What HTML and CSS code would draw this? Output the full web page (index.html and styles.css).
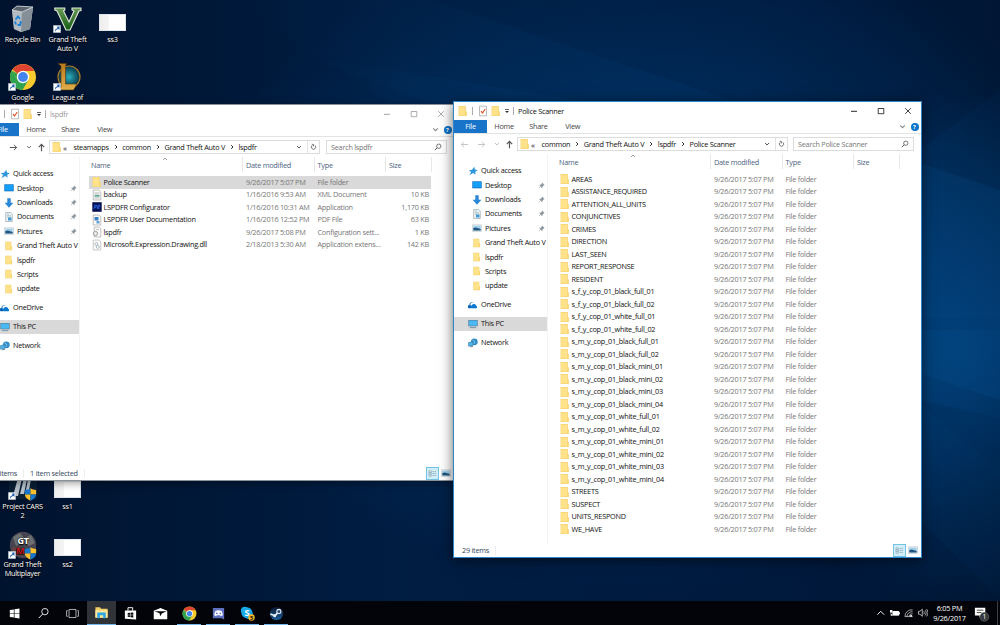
FILE: index.html
```html
<!DOCTYPE html>
<html lang="en">
<head>
  <meta charset="UTF-8" />
  <title>Desktop</title>
  <link rel="stylesheet" href="styles.css">
</head>
<body>
  <!-- icon sprite -->
  <svg class="sprite" aria-hidden="true">
    <defs>
      <linearGradient id="beam" x1="0" y1="0" x2="1" y2="0">
        <stop offset="0" stop-color="#0a62ad" stop-opacity="0"/>
        <stop offset="1" stop-color="#0a62ad" stop-opacity=".42"/>
      </linearGradient>
      <linearGradient id="beamBack" x1="0" y1="0" x2="1" y2="0">
        <stop offset="0" stop-color="#0a5fa8" stop-opacity=".5"/>
        <stop offset="1" stop-color="#0a5fa8" stop-opacity=".1"/>
      </linearGradient>
      <linearGradient id="vGreen" x1="0" y1="0" x2="0" y2="1">
        <stop offset="0" stop-color="#6b9b58"/><stop offset="1" stop-color="#145c12"/>
      </linearGradient>
      <linearGradient id="gold" x1="0" y1="0" x2="0" y2="1">
        <stop offset="0" stop-color="#b9791d"/><stop offset="1" stop-color="#e0ae4b"/>
      </linearGradient>
      <radialGradient id="teal"><stop offset="0" stop-color="#2ab0bd"/><stop offset="1" stop-color="#083348"/></radialGradient>
      <linearGradient id="steamBlue" x1="0" y1="0" x2="0" y2="1">
        <stop offset="0" stop-color="#0b1730"/><stop offset="1" stop-color="#1b5f9c"/>
      </linearGradient>
    </defs>
    <symbol id="folder" viewBox="0 0 10 12">
      <path d="M.6 1h7.200v5.300h.9V11H.6z" fill="#f2cd68"/>
      <path d="M1.100 1.500h6.200v9H1.100z" fill="#ffe28a"/>
      <path d="M7 6.600h1.300v4.100H7z" fill="#fbd870"/>
    </symbol>
    <symbol id="props" viewBox="0 0 10 12">
      <path d="M1.500 1.200h7v9.600h-7z" fill="#fff" stroke="#aaa" stroke-width=".8"/>
      <path d="M3 6.200l1.500 1.800L7.200 4" fill="none" stroke="#e0562d" stroke-width="1.200"/>
    </symbol>
    <symbol id="customize" viewBox="0 0 6 6"><path d="M1 1h4v.8H1zM1 3h4L3 5z" fill="#333"/></symbol>
    <symbol id="back" viewBox="0 0 10 10"><path d="M9 5H1.500M4.500 2l-3 3 3 3" fill="none" stroke="currentColor" stroke-width="1.100"/></symbol>
    <symbol id="forward" viewBox="0 0 10 10"><path d="M1 5h7.500M5.500 2l3 3-3 3" fill="none" stroke="currentColor" stroke-width="1.100"/></symbol>
    <symbol id="up" viewBox="0 0 10 10"><path d="M5 9.200V1.500M2 4.500l3-3 3 3" fill="none" stroke="currentColor" stroke-width="1.300"/></symbol>
    <symbol id="down" viewBox="0 0 6 6"><path d="M1 2l2 2 2-2" fill="none" stroke="currentColor" stroke-width=".9"/></symbol>
    <symbol id="caret" viewBox="0 0 6 6"><path d="M1 4l2-2 2 2" fill="none" stroke="currentColor" stroke-width=".7"/></symbol>
    <symbol id="chev" viewBox="0 0 6 6"><path d="M2.200 1.200L4 3 2.200 4.800" fill="none" stroke="currentColor" stroke-width=".9"/></symbol>
    <symbol id="reload" viewBox="0 0 8 8"><path d="M5.800 2.300A2.500 2.500 0 1 1 2.300 2.200M2 .8l2.300.6-.7 2" fill="none" stroke="#555" stroke-width=".9"/></symbol>
    <symbol id="search" viewBox="0 0 10 10"><circle cx="6" cy="4" r="2.700" fill="none" stroke="currentColor" stroke-width="1"/><path d="M4 6L1 9" stroke="currentColor" stroke-width="1.200"/></symbol>
    <symbol id="min" viewBox="0 0 8 8"><path d="M1 4.300h6" stroke="currentColor" stroke-width=".9"/></symbol>
    <symbol id="max" viewBox="0 0 8 8"><path d="M1.200 1.500h5.600v5.200H1.200z" fill="none" stroke="currentColor" stroke-width=".8"/></symbol>
    <symbol id="close" viewBox="0 0 8 8"><path d="M1.200 1.200l5.600 5.600M6.800 1.200L1.200 6.800" stroke="currentColor" stroke-width=".8"/></symbol>
    <symbol id="star" viewBox="0 0 10 10"><path d="M6.400.8l.5 2.800 2.900.6-2.500 1.600.2 2.900-2.300-1.600-3.700 2.200 1.600-3.200L.8 4.300l3.200-.6z" fill="#2f97dc"/></symbol>
    <symbol id="desk" viewBox="0 0 10 10"><path d="M.3 1.300h9.400v7H.3z" fill="#0c6fc0"/><path d="M1 2h8v5.500H1z" fill="#14a0f8"/></symbol>
    <symbol id="dl" viewBox="0 0 10 10"><path d="M3.300.3h3.400v4.400h2.700L5 9.700.6 4.700h2.700z" fill="#2b87d8"/></symbol>
    <symbol id="doc" viewBox="0 0 10 10"><path d="M1.700.5h5l1.600 1.700v7.300H1.700z" fill="#eef4f8" stroke="#8b9aa5" stroke-width=".6"/><path d="M3 2.200h2M3 3.700h4M3 5.200h4" stroke="#8aa" stroke-width=".6"/><path d="M4 5.500h3.500v3H4z" fill="#469bd2"/></symbol>
    <symbol id="pic" viewBox="0 0 10 10"><path d="M.4 1.800h9.200v6.600H.4z" fill="#f3f6f8" stroke="#aab4ba" stroke-width=".5"/><path d="M1.300 2.700h7.400v4.800H1.300z" fill="#9fd0ee"/><path d="M1.300 5l2.500-.5 4.900 1.600v1.400H1.300z" fill="#22567e"/></symbol>
    <symbol id="cloud" viewBox="0 0 10 10"><path d="M3 8.300H1.400A1.600 1.600 0 0 1 1.300 5 3 3 0 0 1 6.600 3.200 2 2 0 0 0 3 6z" fill="#0a64b5"/><path d="M3.600 8.300a1.600 1.600 0 0 1 .3-3.100 2.300 2.300 0 0 1 4.300.6 1.400 1.400 0 0 1 .3 2.500z" fill="#0a78d2"/></symbol>
    <symbol id="pc" viewBox="0 0 10 10"><path d="M.3 1h9.400v6.300H.3z" fill="#5d7f96"/><path d="M.9 1.600h8.200v5.100H.9z" fill="#4ab8f3"/><path d="M1.800 8.600h6.400" stroke="#6b8ea6" stroke-width=".9"/></symbol>
    <symbol id="net" viewBox="0 0 10 10"><circle cx="6.300" cy="3.800" r="3.400" fill="#2f8cc8"/><path d="M4.500 2l2.300 1.500-1 2.500" fill="none" stroke="#92d5ef" stroke-width=".8"/><path d="M.4 4.600l4.500-1v3.900l-4.500.7z" fill="#4bb4ea" stroke="#376e91" stroke-width=".5"/><path d="M2 8.800l3-.5" stroke="#68899e"/></symbol>
    <symbol id="pin" viewBox="0 0 8 8"><path d="M4.800 1l2.300 2.300-.8.400L5 5l-.3 1.600-2.900-2.900L3.300 3.400l1.200-1.500zM3 5L1 7" fill="#8a949c" stroke="#8a949c" stroke-width=".6"/></symbol>
    <symbol id="xml" viewBox="0 0 10 12"><path d="M1.200 1h6l1.600 1.800V11H1.200z" fill="#fafafa" stroke="#999" stroke-width=".6"/><path d="M2.500 4h5M2.500 9h5" stroke="#999" stroke-width=".7"/><path d="M2.500 5.700h5v2h-5z" fill="#5fa892"/></symbol>
    <symbol id="pdf" viewBox="0 0 10 12"><path d="M1.200 1h6l1.600 1.800V11H1.200z" fill="#fafafa" stroke="#999" stroke-width=".6"/><path d="M2.500 3h4v3.500h-4z" fill="#3b7fc4"/><path d="M4.500 7h3v2.500h-3z" fill="#68a0cf"/></symbol>
    <symbol id="ini" viewBox="0 0 10 12"><path d="M2.200 1h5l1.600 1.800V11H2.200z" fill="#fafafa" stroke="#999" stroke-width=".6"/><circle cx="3.500" cy="7.500" r="2.100" fill="#eee" stroke="#999"/><path d="M4 3.500h3" stroke="#999" stroke-width=".6"/></symbol>
    <symbol id="dll" viewBox="0 0 10 12"><path d="M1.200 1h6l1.600 1.800V11H1.200z" fill="#fafafa" stroke="#aaa" stroke-width=".6"/><circle cx="4.300" cy="5" r="1.500" fill="none" stroke="#9fb0ba" stroke-width=".8"/><circle cx="5.800" cy="7.900" r="1.500" fill="none" stroke="#9fb0ba" stroke-width=".8"/></symbol>
    <symbol id="exe" viewBox="0 0 10 12"><path d="M.3 1.200h9.400v9.600H.3z" fill="#041150"/><path d="M2 8l.8-3.800h1.700L4 6.200H2.500M5.300 8l.8-3.800h1.700l-.7 1.900H5.800L7 8" fill="none" stroke="#2767e6" stroke-width=".9"/></symbol>
    <symbol id="details" viewBox="0 0 14 14"><path d="M2.500 3.500h3v7h-3z" fill="none" stroke="#8a9ca6" stroke-width=".7"/><path d="M2.500 5.800h3M2.500 8.200h3M7 4.500h1.800M9.500 4.500h2M7 7h1.800M9.500 7h2M7 9.500h1.800M9.500 9.500h2" stroke="#7c929f" stroke-width=".8"/></symbol>
    <symbol id="shortcut" viewBox="0 0 8 8"><path d="M.3.3h7.400v7.400H.3z" fill="#fff" stroke="#8fa2b8" stroke-width=".4"/><path d="M2 6.800c-.3-2 .5-3.200 2.300-3.300V2H3l3.500-.7L6.400 5l-.9-.9C4 4.300 3 5 2 6.800z" fill="#1b5cab"/></symbol>
    <symbol id="shield" viewBox="0 0 12 12"><path d="M6 .3C4.600 1.500 2.700 1.800.8 1.800V6H6z" fill="#1777cf"/><path d="M6 .3c1.400 1.200 3.300 1.500 5.200 1.500V6H6z" fill="#fbc02c"/><path d="M.8 6H6v5.800C3 10.500 1 8.500.8 6z" fill="#fbc02c"/><path d="M6 6h5.200C11 8.500 9 10.500 6 11.800z" fill="#1777cf"/></symbol>
    <symbol id="chrome" viewBox="0 0 28 28">
      <circle cx="14" cy="14" r="13" fill="#f9cb2f"/>
      <path d="M2.700 7.500A13 13 0 0 0 13.500 27L19.500 17 14 14 8.700 17.500z" fill="#2fa350"/>
      <path d="M2.700 7.500L8.700 17.300 14 14z" fill="#2fa350"/>
      <path d="M3.500 6.500L9 11l5-3h11.300A13 13 0 0 0 3.500 6.500z" fill="#df4433"/>
      <circle cx="14" cy="14" r="6.200" fill="#fff"/><circle cx="14" cy="14" r="4.900" fill="#4384ee"/>
    </symbol>
  </svg>

  <div class="desktop">
    <svg class="wallpaper" viewBox="0 0 1000 625" preserveAspectRatio="none">
      <path d="M230 0H430L1000 190V400L700 300z" fill="url(#beam)" opacity=".3"/>
      <path d="M300 55L760 130V300L560 150z" fill="url(#beam)" opacity=".35"/>
      <path d="M720 300L920 150 1000 90V318H720z" fill="url(#beamBack)" opacity=".35"/>
      <path d="M720 330H1000V418L920 400 720 345z" fill="url(#beamBack)" opacity=".6"/>
      <path d="M800 380L920 405 1000 470V600L920 520z" fill="url(#beamBack)" opacity=".25"/>
    </svg>

    <div class="icon-grid">
      <div class="shortcut c1 r1">
        <svg class="pic" viewBox="0 0 28 28"><path d="M3 5l5-4 16 1-3 22-9 3-7-3z" fill="#8c969f"/><path d="M3 5l10 2 11-5-3 22-9 3-7-3z" fill="#b8bec3" opacity=".9"/><path d="M13 7l11-5-3 22-9 3z" fill="#858f98"/><path d="M3 5l5-4 16 1-11 5z" fill="#5b646d" stroke="#d8dcdf" stroke-width=".8"/><path d="M6.500 14.500l2.500-3 2 2.500M12 16l-1 4H8.500M6 16.500l1 3" fill="none" stroke="#1680d8" stroke-width="1.800"/></svg>
        <span>Recycle Bin</span>
      </div>
      <div class="shortcut c2 r1">
        <svg class="pic" viewBox="0 0 28 28"><path d="M.8 3h10v2L9.500 6l5.500 11 5-11-2-1V3h9v2.500l-2 .5L16 25h-4L3 6 .8 5z" fill="url(#vGreen)" stroke="#e2e7dc" stroke-width="1.100"/></svg>
        <svg class="arrow"><use href="#shortcut"/></svg>
        <span>Grand Theft Auto V</span>
      </div>
      <div class="shortcut c3 r1"><i class="thumb"></i><span>ss3</span></div>
      <div class="shortcut c1 r2">
        <svg class="pic"><use href="#chrome"/></svg>
        <svg class="arrow"><use href="#shortcut"/></svg>
        <span>Google Chrome</span>
      </div>
      <div class="shortcut c2 r2">
        <svg class="pic" viewBox="0 0 28 28"><circle cx="15" cy="14" r="11" fill="url(#teal)" stroke="#a87926" stroke-width="1.200"/><path d="M4 .5h8.500L11.500 3v18H23l-3.500 6H5l2-3V3z" fill="url(#gold)" stroke="#56390d" stroke-width=".6"/></svg>
        <svg class="arrow"><use href="#shortcut"/></svg>
        <span>League of Legends</span>
      </div>
      <div class="shortcut c1 r9">
        <svg class="pic" viewBox="0 0 28 28"><path d="M0 1h28v26H0z" fill="#0b2035"/><path d="M4 24L10 2h4L9 24zM11 22L16 2h3l-4 20zM17 18L20 2h3l-3 16z" fill="#b8c1cb"/></svg>
        <svg class="arrow"><use href="#shortcut"/></svg>
        <svg class="uac"><use href="#shield"/></svg>
        <span>Project CARS 2</span>
      </div>
      <div class="shortcut c2 r9"><i class="thumb"></i><span>ss1</span></div>
      <div class="shortcut c1 r10">
        <svg class="pic" viewBox="0 0 28 28"><circle cx="14" cy="14" r="13.200" fill="#454450"/><path d="M4 6l7-4 4 5 7-3 4 8-6 3-5-4-8 4z" fill="#6d7071"/><path d="M2 17l9-2 3 10-7 0z" fill="#694240"/><text x="14" y="12.500" class="gt">GT</text><text x="11" y="23" class="gtm">M</text></svg>
        <svg class="arrow"><use href="#shortcut"/></svg>
        <svg class="uac"><use href="#shield"/></svg>
        <span>Grand Theft Multiplayer</span>
      </div>
      <div class="shortcut c2 r10"><i class="thumb"></i><span>ss2</span></div>
    </div>

    <div class="window win-lspdfr">
      <div class="titlebar">
        <svg class="i-file"><use href="#folder"/></svg><i class="bar"></i>
        <svg class="i-file"><use href="#props"/></svg>
        <svg class="i-file"><use href="#folder"/></svg>
        <svg class="i-tiny"><use href="#customize"/></svg><i class="bar"></i>
        <span class="title">lspdfr</span>
        <div class="controls"><svg><use href="#min"/></svg><svg><use href="#max"/></svg><svg><use href="#close"/></svg></div>
      </div>
      <div class="ribbon">
        <span class="file-tab">File</span><span>Home</span><span>Share</span><span>View</span>
        <svg class="expand"><use href="#down"/></svg><b class="help">?</b>
      </div>
      <div class="address-row">
        <svg class="go"><use href="#back"/></svg><svg class="go on"><use href="#forward"/></svg><svg class="recent"><use href="#down"/></svg><svg class="go on"><use href="#up"/></svg>
        <div class="address">
          <svg class="i-file"><use href="#folder"/></svg><em>«</em>
          <span>steamapps</span><svg><use href="#chev"/></svg><span>common</span><svg><use href="#chev"/></svg><span>Grand Theft Auto V</span><svg><use href="#chev"/></svg><span>lspdfr</span>
          <svg class="drop"><use href="#down"/></svg><svg class="reload"><use href="#reload"/></svg>
        </div>
        <div class="search"><span>Search lspdfr</span><svg><use href="#search"/></svg></div>
      </div>
      <div class="body">
        <div class="nav"></div>
        <div class="files" id="lspdfrFiles"></div>
      </div>
      <div class="status"><span>6 items</span><span class="selected-count">1 item selected</span>
        <div class="views"><svg class="on"><use href="#details"/></svg><svg class="large"><use href="#pic"/></svg></div>
      </div>
    </div>

    <div class="window win-scanner active">
      <div class="titlebar">
        <svg class="i-file"><use href="#folder"/></svg><i class="bar"></i>
        <svg class="i-file"><use href="#props"/></svg>
        <svg class="i-file"><use href="#folder"/></svg>
        <svg class="i-tiny"><use href="#customize"/></svg><i class="bar"></i>
        <span class="title">Police Scanner</span>
        <div class="controls"><svg><use href="#min"/></svg><svg><use href="#max"/></svg><svg><use href="#close"/></svg></div>
      </div>
      <div class="ribbon">
        <span class="file-tab">File</span><span>Home</span><span>Share</span><span>View</span>
        <svg class="expand"><use href="#down"/></svg><b class="help">?</b>
      </div>
      <div class="address-row">
        <svg class="go"><use href="#back"/></svg><svg class="go"><use href="#forward"/></svg><svg class="recent off"><use href="#down"/></svg><svg class="go on"><use href="#up"/></svg>
        <div class="address">
          <svg class="i-file"><use href="#folder"/></svg><em>«</em>
          <span>common</span><svg><use href="#chev"/></svg><span>Grand Theft Auto V</span><svg><use href="#chev"/></svg><span>lspdfr</span><svg><use href="#chev"/></svg><span>Police Scanner</span>
          <svg class="drop"><use href="#down"/></svg><svg class="reload"><use href="#reload"/></svg>
        </div>
        <div class="search"><span>Search Police Scanner</span><svg><use href="#search"/></svg></div>
      </div>
      <div class="body">
        <div class="nav"></div>
        <div class="files" id="scannerFiles"></div>
      </div>
      <div class="status"><span>29 items</span>
        <div class="views"><svg class="on"><use href="#details"/></svg><svg class="large"><use href="#pic"/></svg></div>
      </div>
    </div>

    <div class="taskbar">
      <div class="task"><svg viewBox="0 0 16 16"><path d="M3 4.300l4.300-.7v4H3zM8 3.500l5.300-.8v4.900H8zM3 8.300h4.300v4L3 11.700zM8 8.300h5.300v5L8 12.500z" fill="#fff"/></svg></div>
      <div class="task"><svg viewBox="0 0 16 16"><circle cx="9.500" cy="6" r="3.400" fill="none" stroke="#fff" stroke-width=".9"/><path d="M7 8.700L3 12.800" stroke="#fff"/></svg></div>
      <div class="task"><svg viewBox="0 0 16 16"><path d="M4.300 3.700h7.400v8.600H4.300zM3 5H1.700v6H3M13 5h1.300v6H13" fill="none" stroke="#ddd" stroke-width=".8"/></svg></div>
      <div class="task current"><svg viewBox="0 0 16 16"><path d="M1.500 2.500h5l1 1.500h7v9.500h-13z" fill="#f6cd66"/><path d="M1.500 5.500h13v8h-13z" fill="#ffe69a"/><path d="M3.500 8h9v6h-2.700v-3H6.200v3H3.500z" fill="#2ba6e4"/></svg></div>
      <div class="task"><svg viewBox="0 0 16 16"><path d="M2 4.800h12v9.700L2 13.500z" fill="#fff"/><path d="M5.300 5V1.800h5V5" fill="none" stroke="#fff"/><path d="M5 7.500l2.500-.3v2H5zM8 7.200l3-.4v2.400H8zM5 9.800h2.500v2L5 11.500zM8 9.800h3v2.400l-3-.3z" fill="#05070c"/></svg></div>
      <div class="task"><svg viewBox="0 0 16 16"><path d="M.8 5L8 2l7.200 3v9H.8z" fill="#fff"/><path d="M1.500 5.500h13L9.500 8l-1.800 2.800L7 7.800z" fill="#05070c"/></svg></div>
      <div class="task open"><svg class="small"><use href="#chrome"/></svg></div>
      <div class="task open"><svg viewBox="0 0 16 16"><path d="M2 2h12v12.500L11.500 13H2z" fill="#5e70bf"/><path d="M4.800 5.200c2-1 4.400-1 6.400 0 .8 1.300 1.300 3 1.300 4.700l-2 1-.7-1H6.200l-.7 1-2-1c0-1.700.5-3.400 1.300-4.700z" fill="#fff"/><circle cx="6.200" cy="7.800" r=".9" fill="#5e70bf"/><circle cx="9.800" cy="7.800" r=".9" fill="#5e70bf"/></svg></div>
      <div class="task open"><svg viewBox="0 0 16 16"><circle cx="5" cy="4.700" r="4" fill="#18a9e8"/><circle cx="9.500" cy="9.500" r="4.300" fill="#18a9e8"/><circle cx="7.300" cy="7" r="5.800" fill="#18a9e8"/><text x="7.300" y="10.700" class="skype">S</text><circle cx="12.300" cy="12.300" r="3.400" fill="#f9b72b"/><text x="12.300" y="14.500" class="count">5</text></svg></div>
      <div class="task open"><svg viewBox="0 0 16 16"><circle cx="8" cy="8" r="7" fill="url(#steamBlue)"/><path d="M1.500 8.500l5 2L10 6.300" stroke="#e8eef4" stroke-width="1.800" fill="none"/><circle cx="10.500" cy="5.800" r="2.200" fill="#26476e" stroke="#e8eef4" stroke-width="1.100"/><circle cx="6" cy="10.500" r="1.600" fill="#e8eef4"/></svg></div>
      <div class="tray">
        <svg viewBox="0 0 12 12"><path d="M2.500 8L6 4.500 9.500 8" fill="none" stroke="#fff"/></svg>
        <svg viewBox="0 0 12 12"><path d="M3.500 4.200h7v4.800h-7z" fill="#fff"/><path d="M10.500 5.500h1v2h-1zM1 3v2c0 1.500 2.500 1.500 2.500 0V3zM1.800 6v3h2" fill="#fff"/></svg>
        <svg viewBox="0 0 12 12"><path d="M2 10a7 7 0 0 1 8-7M4 10a5.500 5.500 0 0 1 6-5M6 10a4 4 0 0 1 4-3M2 10h8" fill="none" stroke="#bbb" stroke-width=".9"/><path d="M7.500 8.500h2V10h-2z" fill="#fff"/></svg>
        <svg viewBox="0 0 12 12"><path d="M1.500 4.500H3l2.500-2.200v7.400L3 7.500H1.500zM7 4.500c.8 1 .8 2 0 3M8.500 3.300c1.500 1.800 1.500 3.600 0 5.400M10 2.200c2 2.400 2 5.200 0 7.600" fill="none" stroke="#ddd" stroke-width=".8"/></svg>
        <div class="clock"><span>6:05 PM</span><span>9/26/2017</span></div>
        <svg class="action" viewBox="0 0 18 18"><path d="M2 3h11v8H9.500L7 13.500V11H2z" fill="#fff"/><path d="M4 5.500h7M4 8h5" stroke="#111" stroke-width=".8"/><circle cx="12" cy="12.500" r="4.700" fill="#35383c" stroke="#84878a" stroke-width=".5"/><text x="12" y="15" class="note">1</text></svg>
      </div>
    </div>
  </div>

  <script src="script.js"></script>
</body>
</html>
```
FILE: styles.css
```css
* {
  box-sizing: border-box;
}

body {
  margin: 0;
  font-family: 'Open Sans', 'Noto Sans', sans-serif;
  font-size: 7.300px;
  line-height: 9px;
  letter-spacing: -0.25px;
  color: #111;
  overflow: hidden;
}

svg {
  display: block;
  flex: none;
}

.sprite {
  position: absolute;
  width: 0;
  height: 0;
}

.desktop {
  position: relative;
  width: 1000px;
  height: 625px;
  overflow: hidden;
  background-color: #001a3b;
  background-image:
    radial-gradient(ellipse 210px 260px at 960px 350px, rgba(0, 78, 145, 0.6), rgba(0, 60, 120, 0) 100%),
    radial-gradient(ellipse 460px 330px at 650px 260px, rgba(0, 65, 125, 0.75), rgba(0, 50, 100, 0) 100%),
    linear-gradient(90deg, #00132e, #001d42 40%, #001a3e 75%, #001634);
}

.wallpaper {
  position: absolute;
  width: 1000px;
  height: 625px;
}

/* desktop shortcuts */
.icon-grid {
  position: absolute;
  left: 0;
  top: 0;
  display: grid;
  grid-template-columns: repeat(3, 45px);
  grid-template-rows: repeat(10, 58.4px);
}

.c1 { grid-column: 1; }
.c2 { grid-column: 2; }
.c3 { grid-column: 3; }
.r1 { grid-row: 1; }
.r2 { grid-row: 2; }
.r9 { grid-row: 9; }
.r10 { grid-row: 10; }

.shortcut {
  position: relative;
  padding: 5px 2px 0;
  color: #fff;
  text-align: center;
  text-shadow: 0 1px 1px #000, 0 0 2px #000;
}

.shortcut .pic {
  width: 28px;
  height: 28px;
  margin: 0 auto 1.500px;
}

.shortcut .arrow {
  position: absolute;
  left: 8px;
  top: 25px;
  width: 8px;
  height: 8px;
}

.shortcut .uac {
  position: absolute;
  left: 24px;
  top: 21px;
  width: 13px;
  height: 13px;
}

.shortcut span {
  display: block;
  margin: 0 -1px;
}

.thumb {
  display: block;
  width: 27px;
  height: 17px;
  margin: 8.500px auto 4px;
  border: 1px solid #dfe4ea;
  background: linear-gradient(90deg, #eee, #f4f4f4 35%, #fff 36%);
}

.gt {
  font: bold 9px 'Open Sans', sans-serif;
  fill: #fff;
  text-anchor: middle;
}

.gtm {
  font: bold 9px 'Open Sans', sans-serif;
  fill: #c5161d;
  text-anchor: middle;
}

/* explorer windows */
.window {
  position: absolute;
  display: flex;
  flex-direction: column;
  background: #fff;
}

.win-lspdfr {
  left: -15px;
  top: 104px;
  width: 470px;
  height: 377px;
  border: 1px solid #8b9299;
  box-shadow: 0 2px 8px rgba(0, 0, 0, 0.4);
}

.win-scanner {
  left: 453px;
  top: 101px;
  width: 469px;
  height: 457px;
  border: 1px solid #2b86cb;
  box-shadow: 0 2px 12px rgba(0, 0, 0, 0.6);
}

.i-file {
  width: 10px;
  height: 12px;
}

.i-tiny {
  width: 6px;
  height: 6px;
}

.titlebar {
  display: flex;
  align-items: center;
  height: 18px;
  padding: 0 0 0 4px;
  flex: none;
}

.titlebar .bar {
  width: 1px;
  height: 8px;
  margin: 0 5px 0 4px;
  background: #aaa;
}

.titlebar .i-file + .i-file {
  margin-left: 3px;
}

.titlebar .i-tiny {
  margin-left: 3px;
}

.titlebar .i-tiny + .bar {
  margin: 0 4px 0 3px;
}

.title {
  color: #999;
}

.active .title {
  color: #111;
}

.controls {
  display: flex;
  gap: 19px;
  margin-left: auto;
  padding-right: 9.500px;
  color: #999;
}

.controls svg {
  width: 8px;
  height: 8px;
}

.active .controls {
  color: #111;
}

.ribbon {
  display: flex;
  align-items: center;
  height: 14px;
  flex: none;
  border-bottom: 1px solid #e2e3e4;
  color: #444;
}

.ribbon span {
  width: 34.300px;
  text-align: center;
}

.ribbon .file-tab {
  width: 33px;
  height: 13px;
  line-height: 13px;
  background: #1874c9;
  color: #fff;
}

.expand {
  width: 7px;
  height: 7px;
  margin-left: auto;
  color: #888;
}

.help {
  width: 8px;
  height: 8px;
  margin: 0 2.500px 0 5px;
  border-radius: 50%;
  background: #0a73cc;
  color: #fff;
  font-size: 6px;
  line-height: 8px;
  letter-spacing: 0;
  text-align: center;
}

.address-row {
  display: flex;
  align-items: center;
  height: 20px;
  padding: 0 7px 0 6px;
  flex: none;
}

.go {
  width: 9px;
  height: 9px;
  margin-right: 8px;
  color: #c4c4c4;
}

.go.on {
  color: #555;
}

.recent {
  width: 6px;
  height: 6px;
  margin-right: 5px;
  color: #666;
}

.recent.off {
  color: #bbb;
}

.recent + .go {
  margin-right: 3px;
}

.address {
  display: flex;
  align-items: center;
  width: 271px;
  height: 14px;
  padding-left: 2px;
  border: 1px solid #dcdcdc;
}

.address em {
  width: 8px;
  padding-left: 1px;
  font-style: normal;
  font-size: 8px;
}

.address span {
  padding: 0 4px 0 3.500px;
  white-space: nowrap;
}

.address svg:not(.i-file) {
  width: 6px;
  height: 6px;
}

.address .drop {
  margin: 0 5px 0 auto;
  color: #444;
}

.address svg.reload {
  width: 12px;
  height: 12px;
  padding: 2px;
  border-left: 1px solid #e3e3e3;
}

.search {
  display: flex;
  align-items: center;
  justify-content: space-between;
  width: 121px;
  height: 14px;
  margin-left: auto;
  padding: 0 4px;
  border: 1px solid #dcdcdc;
  color: #777;
}

.search svg {
  width: 8px;
  height: 8px;
  color: #555;
}

.body {
  display: flex;
  flex: 1;
  min-height: 0;
}

.nav {
  width: 94px;
  padding-top: 9.600px;
  border-right: 1px solid #f3f3f3;
  flex: none;
}

.nav-item {
  display: flex;
  align-items: center;
  height: 14.380px;
  width: 93px;
  padding-left: 14px;
  white-space: nowrap;
  overflow: hidden;
}

.nav-item svg {
  width: 10px;
  height: 10px;
  margin-right: 3px;
}

.nav-item.child {
  padding-left: 18px;
}

.nav-item.root {
  margin-top: 4.600px;
}

.nav-item.quick {
  margin-top: 0;
}

.nav-item.current {
  background: #d9d9d9;
}

.nav-item .pin {
  width: 7px;
  height: 7px;
  margin: 0 2px 0 auto;
}

.files {
  flex: 1;
  padding-left: 9px;
}

.file-head,
.file-row {
  display: grid;
  grid-template-columns: 154px 71.500px 71.500px 46px;
}

.file-head {
  position: relative;
  height: 19px;
  color: #4d6482;
}

.file-head span {
  height: 15px;
  padding: 4px 0 0 3px;
  border-right: 1px solid #e8e8e8;
}

.file-head span:first-child {
  padding-left: 2px;
}

.sort {
  position: absolute;
  left: 73px;
  top: -1px;
  width: 6px;
  height: 6px;
  color: #777;
}

.file-row {
  width: 342px;
  height: 12.500px;
  align-items: center;
  color: #777;
}

.file-row span {
  padding-left: 3px;
  white-space: nowrap;
}

.file-row .name {
  display: flex;
  align-items: center;
  gap: 1.500px;
  color: #111;
}

.file-row .size {
  padding-right: 3px;
  text-align: right;
}

.file-row.selected {
  background: #d9d9d9;
}

.status {
  display: flex;
  align-items: center;
  height: 14px;
  padding-left: 8px;
  flex: none;
  color: #33475e;
}

.status span {
  padding-right: 6px;
  border-right: 1px solid #eee;
}

.selected-count {
  padding-left: 6px;
}

.views {
  display: flex;
  align-items: center;
  gap: 2px;
  margin-left: auto;
  padding-right: 3.500px;
}

.views .on {
  width: 13px;
  height: 13px;
  border: 1px solid #72c3e4;
  background: #d0edf9;
}

.views .large {
  width: 10px;
  height: 10px;
}

/* taskbar */
.taskbar {
  position: absolute;
  left: 0;
  bottom: 0;
  display: flex;
  width: 1000px;
  height: 24px;
  background: #020409;
}

.task {
  display: flex;
  align-items: center;
  justify-content: center;
  width: 29.100px;
  height: 24px;
}

.task svg {
  width: 15px;
  height: 15px;
}

.task svg.small {
  width: 15px;
  height: 15px;
}

.task.open {
  background: linear-gradient(#76b9ed, #76b9ed) center bottom / 24px 1.500px no-repeat;
}

.task.current {
  border-bottom: 1.500px solid #76b9ed;
  background: #303337;
}

.skype {
  font: bold 10px 'Open Sans', sans-serif;
  fill: #fff;
  text-anchor: middle;
}

.count {
  font: bold 6px 'Open Sans', sans-serif;
  fill: #111;
  text-anchor: middle;
}

.note {
  font: 7px 'Open Sans', sans-serif;
  fill: #fff;
  text-anchor: middle;
}

.tray {
  display: flex;
  align-items: center;
  gap: 2.500px;
  margin-left: auto;
  margin-right: 2px;
  padding-right: 7px;
  border-right: 1px solid #3c3f44;
  color: #fff;
}

.tray svg {
  width: 11.500px;
  height: 11.500px;
}

.clock {
  display: flex;
  flex-direction: column;
  width: 38px;
  line-height: 10.500px;
  text-align: center;
}

.tray .action {
  width: 17px;
  height: 17px;
  margin-left: 2px;
}
```
FILE: script.js
```js
const NAV = [
  ["star", "Quick access", "root quick"],
  ["desk", "Desktop", "child", true],
  ["dl", "Downloads", "child", true],
  ["doc", "Documents", "child", true],
  ["pic", "Pictures", "child", true],
  ["folder", "Grand Theft Auto V", "child"],
  ["folder", "lspdfr", "child"],
  ["folder", "Scripts", "child"],
  ["folder", "update", "child"],
  ["cloud", "OneDrive", "root"],
  ["pc", "This PC", "root current"],
  ["net", "Network", "root"]
];

const LSPDFR = [
  ["folder", "Police Scanner", "9/26/2017 5:07 PM", "File folder", ""],
  ["xml", "backup", "1/16/2016 9:53 AM", "XML Document", "10 KB"],
  ["exe", "LSPDFR Configurator", "1/16/2016 10:31 AM", "Application", "1,170 KB"],
  ["pdf", "LSPDFR User Documentation", "1/16/2016 12:52 PM", "PDF File", "63 KB"],
  ["ini", "lspdfr", "9/26/2017 5:08 PM", "Configuration sett...", "1 KB"],
  ["dll", "Microsoft.Expression.Drawing.dll", "2/18/2013 5:30 AM", "Application extens...", "142 KB"]
];

const SCANNER = [
  "AREAS", "ASSISTANCE_REQUIRED", "ATTENTION_ALL_UNITS", "CONJUNCTIVES", "CRIMES",
  "DIRECTION", "LAST_SEEN", "REPORT_RESPONSE", "RESIDENT",
  "s_f_y_cop_01_black_full_01", "s_f_y_cop_01_black_full_02",
  "s_f_y_cop_01_white_full_01", "s_f_y_cop_01_white_full_02",
  "s_m_y_cop_01_black_full_01", "s_m_y_cop_01_black_full_02",
  "s_m_y_cop_01_black_mini_01", "s_m_y_cop_01_black_mini_02",
  "s_m_y_cop_01_black_mini_03", "s_m_y_cop_01_black_mini_04",
  "s_m_y_cop_01_white_full_01", "s_m_y_cop_01_white_full_02",
  "s_m_y_cop_01_white_mini_01", "s_m_y_cop_01_white_mini_02",
  "s_m_y_cop_01_white_mini_03", "s_m_y_cop_01_white_mini_04",
  "STREETS", "SUSPECT", "UNITS_RESPOND", "WE_HAVE"
].map(name => ["folder", name, "9/26/2017 5:07 PM", "File folder", ""]);

function renderNav(el) {
  el.innerHTML = NAV.map(([icon, label, cls, pinned]) => `
    <div class="nav-item ${cls}">
      <svg><use href="#${icon}"/></svg>${label}
      ${pinned ? `<svg class="pin"><use href="#pin"/></svg>` : ""}
    </div>`).join("");
}

function renderFiles(id, files, selected) {
  const head = `<div class="file-head"><span>Name</span><span>Date modified</span><span>Type</span><span>Size</span>
    <svg class="sort"><use href="#caret"/></svg></div>`;
  document.getElementById(id).innerHTML = head + files.map(([icon, name, date, type, size], i) => `
    <div class="file-row ${i === selected ? "selected" : ""}">
      <span class="name"><svg class="i-file"><use href="#${icon}"/></svg>${name}</span>
      <span>${date}</span><span>${type}</span><span class="size">${size}</span>
    </div>`).join("");
}

document.querySelectorAll(".nav").forEach(renderNav);
renderFiles("lspdfrFiles", LSPDFR, 0);
renderFiles("scannerFiles", SCANNER, -1);
```
